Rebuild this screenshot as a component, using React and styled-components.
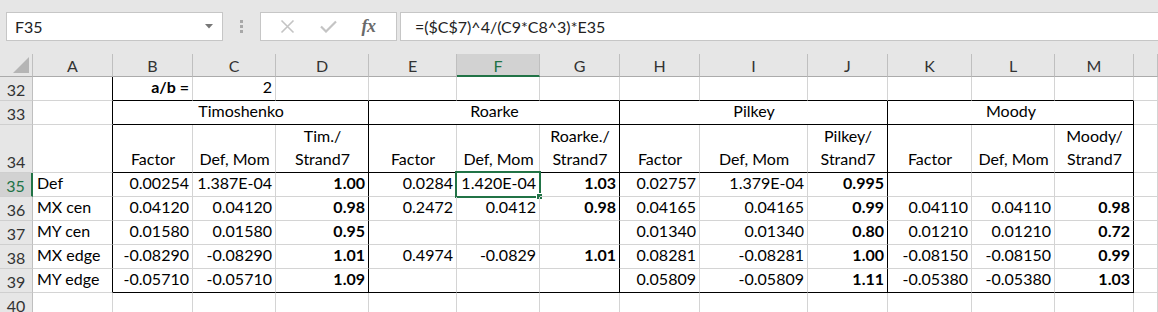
import React from "react";
import styled, { createGlobalStyle } from "styled-components";

const GREEN = "#217346";
const GRID = "#d4d4d4";

const GlobalStyle = createGlobalStyle`
  html, body {
    margin: 0;
    padding: 0;
    background: #ffffff;
    overflow: hidden;
  }
  body {
    font-family: Lato, "Liberation Sans", sans-serif;
    color: #000000;
  }
`;

const COLS = ["A", "B", "C", "D", "E", "F", "G", "H", "I", "J", "K", "L", "M", "N"];
const WIDTHS = [80, 80, 83, 93, 88, 83, 80, 80, 108, 80, 84, 83, 79];

const GROUPS = ["Timoshenko", "Roarke", "Pilkey", "Moody"];
const SUBHEADS = [
  "Factor", "Def, Mom", "Tim./\nStrand7",
  "Factor", "Def, Mom", "Roarke./\nStrand7",
  "Factor", "Def, Mom", "Pilkey/\nStrand7",
  "Factor", "Def, Mom", "Moody/\nStrand7",
];

const DATA = [
  { n: 35, label: "Def", vals: ["0.00254", "1.387E-04", "1.00", "0.0284", "1.420E-04", "1.03", "0.02757", "1.379E-04", "0.995", "", "", ""] },
  { n: 36, label: "MX cen", vals: ["0.04120", "0.04120", "0.98", "0.2472", "0.0412", "0.98", "0.04165", "0.04165", "0.99", "0.04110", "0.04110", "0.98"] },
  { n: 37, label: "MY cen", vals: ["0.01580", "0.01580", "0.95", "", "", "", "0.01340", "0.01340", "0.80", "0.01210", "0.01210", "0.72"] },
  { n: 38, label: "MX edge", vals: ["-0.08290", "-0.08290", "1.01", "0.4974", "-0.0829", "1.01", "0.08281", "-0.08281", "1.00", "-0.08150", "-0.08150", "0.99"] },
  { n: 39, label: "MY edge", vals: ["-0.05710", "-0.05710", "1.09", "", "", "", "0.05809", "-0.05809", "1.11", "-0.05380", "-0.05380", "1.03"] },
];

/* ---------- formula bar ---------- */

const TopBar = styled.div`
  display: flex;
  align-items: flex-start;
  height: 54px;
  box-sizing: border-box;
  padding: 12px 0 0 6px;
  background: #e6e6e6;
  font-family: Lato, "Liberation Sans", sans-serif;
  font-size: 16px;
  color: #222222;
`;

const Box = styled.div`
  display: flex;
  align-items: center;
  height: 29px;
  box-sizing: border-box;
  background: #ffffff;
  border: 1px solid #c6c6c6;
`;

const NameBox = styled(Box)`
  width: 217px;
  justify-content: space-between;
  padding: 0 9px 0 8px;
`;

const Grip = styled.div`
  width: 37px;
  height: 29px;
  display: flex;
  flex-direction: column;
  align-items: center;
  justify-content: center;
  gap: 2px;
  span {
    width: 3px;
    height: 3px;
    background: #a8a8a8;
  }
`;

const FxBox = styled(Box)`
  width: 137px;
  justify-content: space-around;
  padding: 0 8px 0 6px;
`;

const FxLabel = styled.span`
  font-family: "Liberation Serif", "DejaVu Serif", serif;
  font-style: italic;
  font-weight: 700;
  font-size: 18px;
  color: #6a6a6a;
  letter-spacing: -0.5px;
`;

const FormulaInput = styled(Box)`
  flex: 1;
  margin-left: 3px;
  border-right: none;
  padding-left: 14px;
`;

/* ---------- sheet ---------- */

const Sheet = styled.div`
  display: grid;
  grid-template-columns: 33px ${WIDTHS.map((w) => `${w}px`).join(" ")} 1fr;
  grid-template-rows: 23px 24px 24px 48px repeat(6, 24px);
  font-family: Lato, "Liberation Sans", sans-serif;
  font-size: 16px;
`;

const Corner = styled.div`
  display: flex;
  align-items: flex-end;
  justify-content: flex-end;
  padding: 0 3px 3px 0;
  background: #e6e6e6;
  border-right: 1px solid #bfbfbf;
  border-bottom: 1px solid #ababab;
`;

const ColHead = styled.div`
  display: flex;
  align-items: center;
  justify-content: center;
  box-sizing: border-box;
  background: ${(p) => (p.$active ? "#d2d2d2" : "#e6e6e6")};
  color: ${(p) => (p.$active ? GREEN : "#333333")};
  border-right: 1px solid #bfbfbf;
  border-bottom: ${(p) => (p.$active ? `2px solid ${GREEN}` : "1px solid #ababab")};
  padding-top: 1px;
`;

const RowHead = styled.div`
  display: flex;
  align-items: flex-end;
  justify-content: center;
  box-sizing: border-box;
  padding-bottom: 1px;
  background: ${(p) => (p.$active ? "#d2d2d2" : "#e6e6e6")};
  color: ${(p) => (p.$active ? GREEN : "#333333")};
  border-right: ${(p) => (p.$active ? `2px solid ${GREEN}` : "1px solid #bfbfbf")};
  border-bottom: 1px solid #cfcfcf;
`;

const Cell = styled.div`
  position: relative;
  display: flex;
  align-items: flex-end;
  justify-content: ${(p) =>
    p.$align === "right" ? "flex-end" : p.$align === "center" ? "center" : "flex-start"};
  grid-column: span ${(p) => p.$span || 1};
  box-sizing: border-box;
  padding: 0 3px 2px 4px;
  white-space: pre-line;
  text-align: center;
  line-height: 23px;
  font-weight: ${(p) => (p.$bold ? 700 : 400)};
  border-right: 1px solid ${(p) => (p.$rb ? "#000000" : GRID)};
  border-bottom: 1px solid ${(p) => (p.$bb ? "#000000" : GRID)};
`;

const Selection = styled.div`
  position: absolute;
  left: -2px;
  top: -2px;
  right: -2px;
  bottom: -2px;
  border: 2px solid ${GREEN};
  pointer-events: none;
  &::after {
    content: "";
    position: absolute;
    right: -4px;
    bottom: -4px;
    width: 5px;
    height: 5px;
    background: ${GREEN};
    border: 1px solid #ffffff;
  }
`;

/* ---------- helpers ---------- */

// column index: 0 = A ... 13 = N
const rightBlack = (c, row) => c === 0 ? row >= 32 && row <= 39 : [3, 6, 9, 12].includes(c) && row >= 33 && row <= 39;
const bottomBlack = (c, row) => c >= 1 && c <= 12 && [32, 33, 34, 39].includes(row);

function Row({ n, children, active }) {
  return (
    <>
      <RowHead $active={active}>{n}</RowHead>
      {children}
    </>
  );
}

function Plain({ c, row, ...rest }) {
  return <Cell $rb={rightBlack(c, row)} $bb={bottomBlack(c, row)} {...rest} />;
}

export default function App() {
  return (
    <>
      <GlobalStyle />
      <TopBar>
        <NameBox>
          <span>F35</span>
          <svg width="8" height="5" viewBox="0 0 8 5">
            <polygon points="0,0 8,0 4,4.5" fill="#777777" />
          </svg>
        </NameBox>
        <Grip>
          <span />
          <span />
          <span />
        </Grip>
        <FxBox>
          <svg width="15" height="15" viewBox="0 0 15 15">
            <path d="M1.5 1.5 L13.5 13.5 M13.5 1.5 L1.5 13.5" stroke="#c4c4c4" strokeWidth="1.6" fill="none" />
          </svg>
          <svg width="17" height="13" viewBox="0 0 17 13">
            <path d="M1 6.5 L6 11.5 L16 1.5" stroke="#c4c4c4" strokeWidth="2.2" fill="none" />
          </svg>
          <FxLabel>fx</FxLabel>
        </FxBox>
        <FormulaInput>=($C$7)^4/(C9*C8^3)*E35</FormulaInput>
      </TopBar>

      <Sheet>
        <Corner>
          <svg width="16" height="16" viewBox="0 0 16 16">
            <polygon points="16,0 16,16 0,16" fill="#b5b5b5" />
          </svg>
        </Corner>
        {COLS.map((l) => (
          <ColHead key={l} $active={l === "F"}>{l === "N" ? "" : l}</ColHead>
        ))}

        <Row n={32}>
          {COLS.map((_, c) => (
            <Plain key={c} c={c} row={32} $align="right" $bold={c === 1}>
              {c === 1 ? "a/b =" : c === 2 ? "2" : ""}
            </Plain>
          ))}
        </Row>

        <Row n={33}>
          <Plain c={0} row={33} />
          {GROUPS.map((g, i) => (
            <Plain key={g} c={3 + i * 3} row={33} $span={3} $align="center">
              {g}
            </Plain>
          ))}
          <Plain c={13} row={33} />
        </Row>

        <Row n={34}>
          <Plain c={0} row={34} />
          {SUBHEADS.map((h, i) => (
            <Plain key={i} c={i + 1} row={34} $align="center">
              {h}
            </Plain>
          ))}
          <Plain c={13} row={34} />
        </Row>

        {DATA.map((r) => (
          <Row key={r.n} n={r.n} active={r.n === 35}>
            <Plain c={0} row={r.n}>{r.label}</Plain>
            {r.vals.map((v, i) => (
              <Plain key={i} c={i + 1} row={r.n} $align="right" $bold={i % 3 === 2}>
                {v}
                {r.n === 35 && i === 4 && <Selection />}
              </Plain>
            ))}
            <Plain c={13} row={r.n} />
          </Row>
        ))}

        <Row n={40}>
          {COLS.map((_, c) => (
            <Plain key={c} c={c} row={40} />
          ))}
        </Row>
      </Sheet>
    </>
  );
}
